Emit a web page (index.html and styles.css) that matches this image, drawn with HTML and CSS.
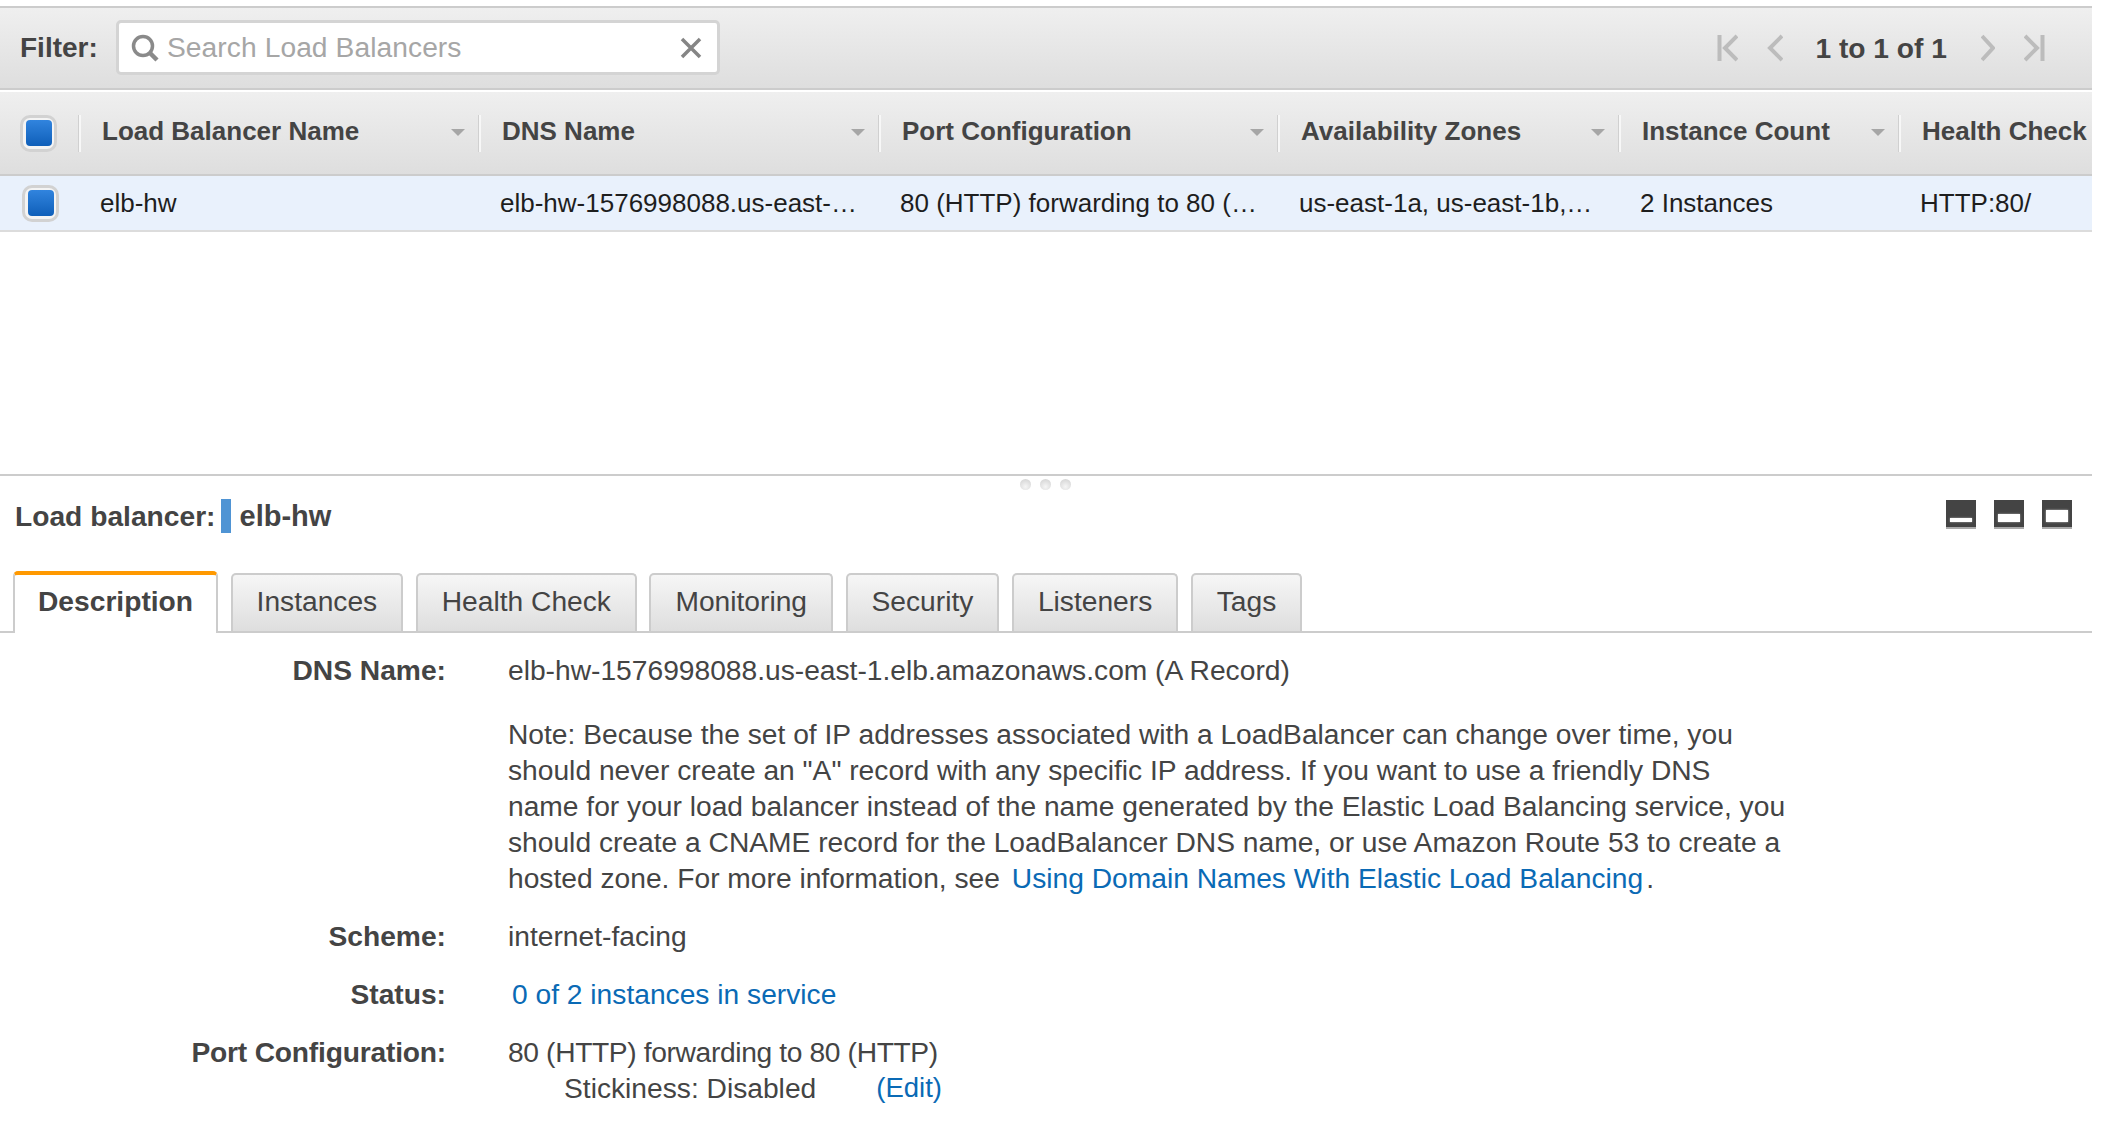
FILE: index.html
```html
<!DOCTYPE html>
<html lang="en">
<head>
<meta charset="utf-8">
<title>Load Balancers</title>
<link rel="stylesheet" href="styles.css">
</head>
<body>
<div class="page">
  <section class="list-pane">
    <div class="toolbar">
      <span class="filter-label">Filter:</span>
      <div class="search">
        <svg class="search-icon" viewBox="0 0 28 28"><circle cx="12" cy="12" r="9.5"/><path class="handle" d="M19 19l7 7"/></svg>
        <span class="placeholder">Search Load Balancers</span>
        <svg class="clear-icon" viewBox="0 0 22 22"><path d="M2 2l18 18M20 2L2 20"/></svg>
      </div>
      <div class="pager">
        <svg class="pg pg-first" viewBox="0 0 21 28"><path d="M2.5 1v26M20 2L8 14l12 12"/></svg>
        <svg class="pg pg-prev" viewBox="0 0 16 28"><path d="M15 2L3 14l12 12"/></svg>
        <span class="pg-text">1 to 1 of 1</span>
        <svg class="pg pg-next" viewBox="0 0 14 28"><path d="M1 2l11 12L1 26"/></svg>
        <svg class="pg pg-last" viewBox="0 0 21 28"><path d="M18.5 1v26M1 2l12 12L1 26"/></svg>
      </div>
    </div>
    <div class="cols head">
      <div class="check-cell"><span class="check"><i></i></span></div>
      <div class="hcell"><span>Load Balancer Name</span><b class="caret"></b></div>
      <div class="hcell"><span>DNS Name</span><b class="caret"></b></div>
      <div class="hcell"><span>Port Configuration</span><b class="caret"></b></div>
      <div class="hcell"><span>Availability Zones</span><b class="caret"></b></div>
      <div class="hcell"><span>Instance Count</span><b class="caret"></b></div>
      <div class="hcell last"><span>Health Check</span></div>
    </div>
    <div class="cols row">
      <div class="check-cell row-check"><span class="check"><i></i></span></div>
      <div class="cell">elb-hw</div>
      <div class="cell">elb-hw-1576998088.us-east-1.elb.amazonaws.com</div>
      <div class="cell cell-port">80 (HTTP) forwarding to 80 (HTTP)</div>
      <div class="cell">us-east-1a, us-east-1b, us-east-1c</div>
      <div class="cell">2 Instances</div>
      <div class="cell">HTTP:80/</div>
    </div>
  </section>

  <section class="detail-pane">
    <div class="grip"><i></i><i></i><i></i></div>
    <div class="title-row">
      <span class="title-label">Load balancer:</span>
      <span class="marker"></span>
      <span class="title-name">elb-hw</span>
      <div class="sizers">
        <span class="sizer s1"><i></i></span>
        <span class="sizer s2"><i></i></span>
        <span class="sizer s3"><i></i></span>
      </div>
    </div>
    <div class="tabs">
      <span class="tab active">Description</span>
      <span class="tab">Instances</span>
      <span class="tab">Health Check</span>
      <span class="tab">Monitoring</span>
      <span class="tab">Security</span>
      <span class="tab">Listeners</span>
      <span class="tab">Tags</span>
    </div>
    <dl class="props">
      <dt>DNS Name:</dt>
      <dd>elb-hw-1576998088.us-east-1.elb.amazonaws.com (A Record)
        <p class="note">Note: Because the set of IP addresses associated with a LoadBalancer can change over time, you<br>should never create an "A" record with any specific IP address. If you want to use a friendly DNS<br>name for your load balancer instead of the name generated by the Elastic Load Balancing service, you<br>should create a CNAME record for the LoadBalancer DNS name, or use Amazon Route 53 to create a<br>hosted zone. For more information, see <a class="link spaced" href="#">Using Domain Names With Elastic Load Balancing</a>.</p>
      </dd>
      <dt>Scheme:</dt>
      <dd>internet-facing</dd>
      <dt>Status:</dt>
      <dd><a class="link status" href="#">0 of 2 instances in service</a></dd>
      <dt class="port-label">Port Configuration:</dt>
      <dd><span class="port-value">80 (HTTP) forwarding to 80 (HTTP)</span>
        <div class="stick"><span>Stickiness: Disabled</span><a class="link edit" href="#">(Edit)</a></div>
      </dd>
    </dl>
  </section>
</div>
</body>
</html>
```

FILE: styles.css
```css
* { box-sizing: border-box; }
html, body { margin: 0; padding: 0; background: #fff; }
body {
  font-family: "Liberation Sans", Arial, sans-serif;
  font-size: 28.2px;
  line-height: 36px;
  color: #444;
  overflow: hidden;
}
.page { width: 2092px; height: 1146px; padding-top: 6px; }

.toolbar {
  display: flex;
  align-items: center;
  height: 84px;
  padding: 2px 0 0 20px;
  background: linear-gradient(#efefef, #dedede);
  border-top: 2px solid #ccc;
  border-bottom: 2px solid #ccc;
}
.filter-label { font-weight: 700; font-size: 28px; width: 96px; margin-top: -2px; }
.search {
  display: flex;
  align-items: center;
  width: 604px;
  height: 55px;
  margin-top: -3px;
  padding: 0 15px 0 12px;
  background: #fff;
  border: 3px solid #d4d4d4;
  border-radius: 5px;
}
.search-icon { width: 28px; height: 28px; margin-right: 8px; fill: none; stroke: #8a8a8a; stroke-width: 3.5; }
.search-icon .handle { stroke-width: 4.5; }
.placeholder { flex: 1; color: #a6a6a6; letter-spacing: 0.07px; margin-top: -1px; }
.clear-icon { width: 22px; height: 22px; fill: none; stroke: #858585; stroke-width: 3.5; }
.pager { display: flex; align-items: center; margin-left: auto; margin-top: -3px; padding-right: 47px; }
.pg { height: 28px; fill: none; stroke: #bcbcbc; stroke-width: 4; }
.pg-first, .pg-last { width: 21px; }
.pg-prev { width: 16px; margin: 0 32px 0 29px; }
.pg-next { width: 14px; margin: 0 29px 0 34px; }
.pg-text { font-weight: 700; }

.cols {
  display: grid;
  grid-template-columns: 81px 400px 400px 399px 341px 280px 191px;
  font-size: 26px;
}
.head {
  height: 84px;
  margin-top: 2px;
  align-items: center;
  background: linear-gradient(#efefef, #dedede);
  border-bottom: 2px solid #ccc;
  font-weight: 700;
}
.check-cell {
  display: flex;
  align-items: center;
  height: 37px;
  padding-left: 20px;
  border-right: 2px solid #f7f7f7;
  box-shadow: inset -1px 0 0 #d0d0d0;
}
.check {
  display: flex;
  align-items: center;
  justify-content: center;
  width: 37px;
  height: 37px;
  background: #f4f4f4;
  border: 3px solid #d2d2d2;
  border-radius: 10px;
}
.check i {
  display: block;
  width: 26px;
  height: 26px;
  border-radius: 4px;
  background: linear-gradient(#3184de, #0f5fb9);
}
.hcell {
  display: flex;
  align-items: center;
  justify-content: space-between;
  height: 37px;
  padding: 0 14px 0 21px;
  border-right: 2px solid #f7f7f7;
  box-shadow: inset -1px 0 0 #d0d0d0;
  white-space: nowrap;
  min-width: 0;
}
.hcell span { padding-bottom: 4px; }
.hcell.last { border-right: 0; box-shadow: none; overflow: hidden; }
.caret {
  flex: none;
  width: 0;
  height: 0;
  margin-bottom: 2px;
  border-left: 7px solid transparent;
  border-right: 7px solid transparent;
  border-top: 7px solid #a6a6a6;
}
.row {
  height: 56px;
  align-items: center;
  background: #e9f1fc;
  border-bottom: 2px solid #dcdcdc;
  color: #1e1e1e;
}
.row-check { padding-left: 22px; border: 0; box-shadow: none; }
.cell {
  padding: 0 24px 0 19px;
  white-space: nowrap;
  overflow: hidden;
  text-overflow: ellipsis;
}
.cell-port { padding-right: 16px; }

.detail-pane { margin-top: 242px; border-top: 2px solid #ccc; }
.grip { display: flex; justify-content: center; gap: 9px; height: 12px; padding: 3px 2px 0 0; }
.grip i {
  display: block;
  width: 11px;
  height: 11px;
  border-radius: 50%;
  background: radial-gradient(circle at 50% 70%, #f6f6f6, #cfcfcf);
}
.title-row { display: flex; align-items: center; height: 40px; margin-top: 8px; padding-left: 15px; font-weight: 700; }
.marker { width: 10px; height: 34px; margin: 0 9px 0 5px; background: #4f94d4; }
.title-name { font-size: 29px; }
.sizers { display: flex; gap: 18px; margin-left: auto; margin-bottom: 3px; padding-right: 20px; }
.sizer {
  display: flex;
  align-items: flex-end;
  justify-content: center;
  width: 30px;
  height: 29px;
  padding-bottom: 5px;
  background: #444;
  border-bottom: 2px solid #aaa;
}
.sizer i { display: block; width: 22px; background: #fff; box-shadow: 0 0 2px #bbb; }
.s1 i { height: 4px; }
.s2 i { height: 8px; }
.s3 i { height: 12px; }

.tabs {
  display: flex;
  align-items: flex-end;
  gap: 12.5px;
  height: 62px;
  margin-top: 35px;
  padding-left: 13px;
  border-bottom: 2px solid #ccc;
}
.tab {
  height: 58px;
  padding: 8px 24px 0;
  background: linear-gradient(#f6f6f6, #dedede);
  border: 2px solid #ccc;
  border-bottom: 0;
  border-radius: 5px 5px 0 0;
  white-space: nowrap;
}
.tab.active {
  height: 62px;
  margin-bottom: -2px;
  padding: 8px 23px 0;
  background: #fff;
  border-top: 4px solid #f90;
  font-weight: 700;
}

.props {
  display: grid;
  grid-template-columns: 446px 1fr;
  column-gap: 62px;
  row-gap: 22px;
  margin: 19px 0 0;
}
.props dt { font-weight: 700; text-align: right; }
.props dd { margin: 0; }
.props .port-label { letter-spacing: -0.2px; }
.port-value { letter-spacing: -0.36px; }
.note { margin: 28px 0 0; }
.link { color: #0a6ab5; text-decoration: none; }
.spaced { margin-left: 4px; margin-right: 3px; }
.status { margin-left: 4px; }
.stick { display: flex; gap: 60px; padding-left: 56px; }
.edit { font-size: 27.5px; }
```
